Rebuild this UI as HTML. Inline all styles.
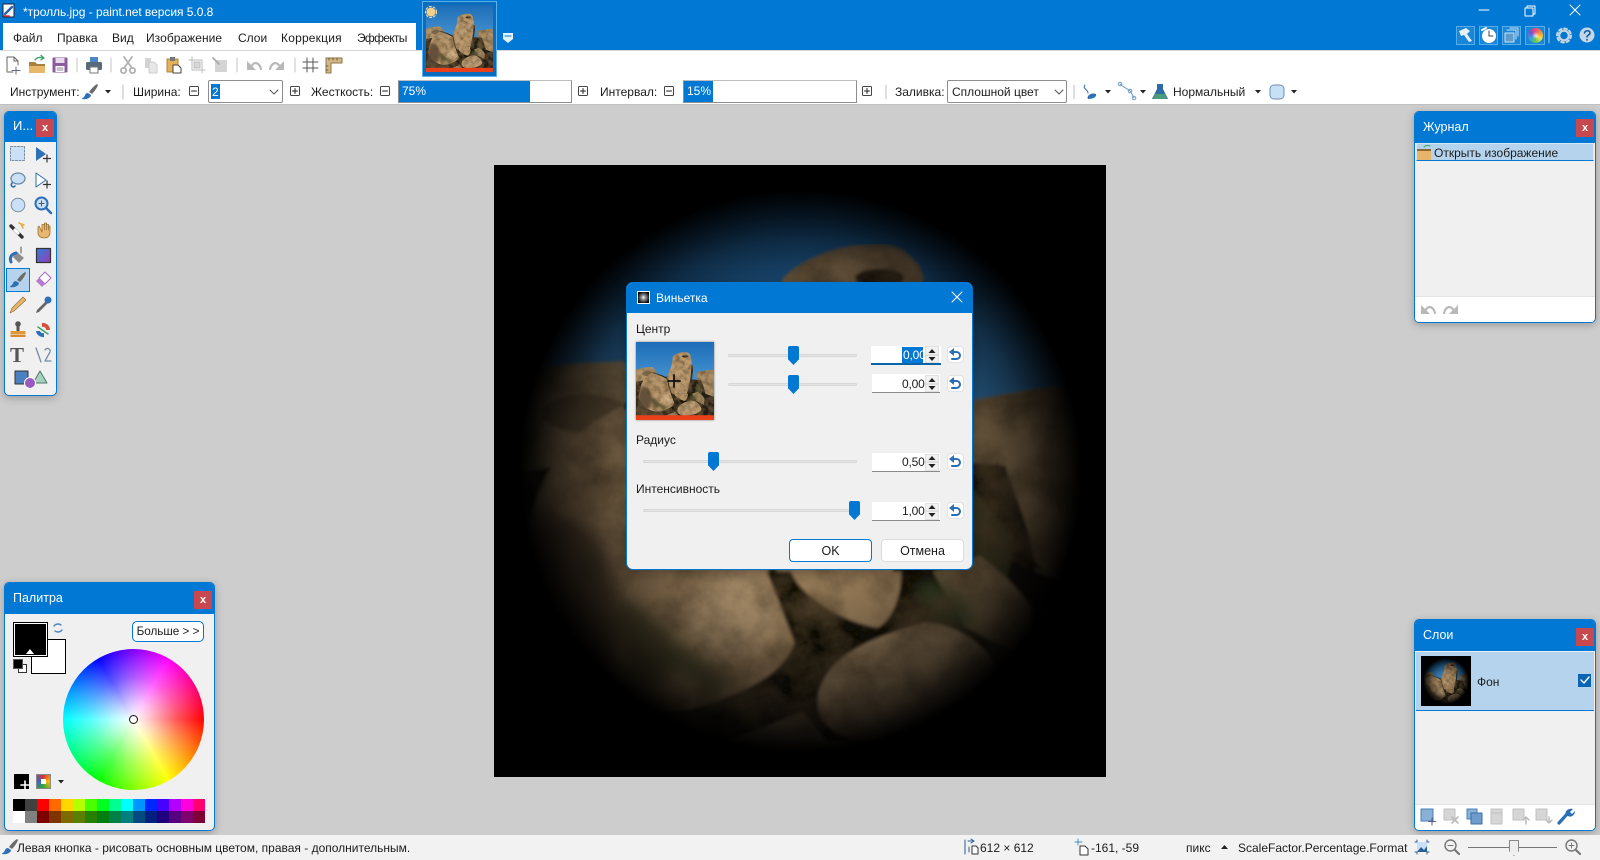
<!DOCTYPE html>
<html lang="ru"><head><meta charset="utf-8"><title>paint.net</title>
<style>
html,body{margin:0;padding:0;width:1600px;height:860px;overflow:hidden;background:#cdcdcd;font-family:"Liberation Sans","Noto Sans CJK SC",sans-serif;font-size:12px;color:#1c1c1c}
div,span,svg{position:absolute;box-sizing:border-box}
.t{white-space:nowrap;line-height:16px}
.panel{background:#f0f0f0;border:1px solid #0078d4;border-radius:5px;box-shadow:0 2px 8px rgba(0,0,0,.25);overflow:hidden}
.hd{left:0;top:0;right:0;background:#0078d4}
.x{background:#c7494f;color:#fff;font-weight:bold;font-size:11px;text-align:center;line-height:18px}
.inp{background:#fff;border-bottom:1px solid #8a8a8a}
.sp{background:#f1f1f1;border:1px solid #e0e0e0}
.rs{background:#fff;border:1px solid #e2e2e2;border-radius:4px}
.tr{height:3px;background:#e4e4e4;border:1px solid #d8d8d8;border-radius:2px}
.th{width:11px;height:19px;background:#0078d4;clip-path:polygon(0 0,100% 0,100% 70%,50% 100%,0 70%);border-radius:2px}
.bar{background:#fff;border:1px solid #8d8d8d;border-top-color:#bdbdbd;height:23px;top:80px}
.fill{left:0;top:0;bottom:0;background:#0078d4;color:#fff;padding-left:3px;line-height:21px}
.btn{background:#fff;border:1px solid #dcdcdc;border-radius:4px;text-align:center;line-height:22px;font-size:12.5px}
</style></head><body>

<!-- title + toolbar -->
<div style="left:0;top:0;width:1600px;height:50px;background:#0078d4"></div>
<div style="left:3px;top:23px;width:413px;height:27px;background:#fff"></div>
<div style="left:0;top:50px;width:1600px;height:55px;background:#fff;border-top:1px solid #d8d8d8;border-bottom:1px solid #c0c0c0"></div>
<div class="t" style="left:23px;top:4px;color:#fff;font-size:12px;letter-spacing:-.04px">*тролль.jpg - paint.net версия 5.0.8</div>
<div class="t" style="left:13px;top:30px">Файл</div>
<div class="t" style="left:57px;top:30px">Правка</div>
<div class="t" style="left:112px;top:30px">Вид</div>
<div class="t" style="left:146px;top:30px;letter-spacing:.05px">Изображение</div>
<div class="t" style="left:238px;top:30px">Слои</div>
<div class="t" style="left:281px;top:30px;letter-spacing:.2px">Коррекция</div>
<div class="t" style="left:357px;top:30px;letter-spacing:-.7px">Эффекты</div>

<div class="t" style="left:10px;top:84px">Инструмент:</div>
<div class="t" style="left:133px;top:84px">Ширина:</div>
<div style="left:208px;top:80px;width:75px;height:23px;background:#fff;border:1px solid #8d8d8d;border-radius:2px"></div>
<div class="t" style="left:211px;top:84px;background:#0078d4;color:#fff;height:15px;padding:0 1px">2</div>
<div class="t" style="left:311px;top:84px">Жесткость:</div>
<div class="bar" style="left:398px;width:174px"><div class="fill" style="width:131px">75%</div></div>
<div class="t" style="left:600px;top:84px">Интервал:</div>
<div class="bar" style="left:683px;width:174px"><div class="fill" style="width:29px">15%</div></div>
<div class="t" style="left:895px;top:84px">Заливка:</div>
<div style="left:947px;top:80px;width:120px;height:23px;background:#fff;border:1px solid #8d8d8d;border-radius:2px"></div>
<div class="t" style="left:952px;top:84px">Сплошной цвет</div>
<div class="t" style="left:1173px;top:84px">Нормальный</div>

<!-- document thumbnail -->
<div style="left:422px;top:1px;width:75px;height:76px;border:1px solid #58b0ee;background:#0a6cbc"></div>
<svg style="left:426px;top:5px" width="67" height="67" viewBox="10 12 1548 1548"><use href="#photo"/><rect x="10" y="1465" width="1548" height="95" fill="#e8401a"/></svg>

<!-- canvas -->
<svg style="left:494px;top:165px" width="612" height="612" viewBox="10 12 1548 1548">
<defs>
<linearGradient id="sky" x1="0" y1="0" x2="0" y2="1"><stop offset="0" stop-color="#1c6db8"/><stop offset=".4" stop-color="#3f8dcc"/></linearGradient>
<radialGradient id="vig" gradientUnits="userSpaceOnUse" cx="784" cy="786" r="725">
<stop offset="0" stop-color="#000" stop-opacity=".05"/><stop offset=".4" stop-color="#000" stop-opacity=".16"/><stop offset=".6" stop-color="#000" stop-opacity=".34"/><stop offset=".8" stop-color="#000" stop-opacity=".64"/><stop offset=".9" stop-color="#000" stop-opacity=".85"/><stop offset=".98" stop-color="#000"/></radialGradient>
<filter id="tex" x="0" y="0" width="100%" height="100%"><feTurbulence type="fractalNoise" baseFrequency=".009" numOctaves="5" seed="7" result="n"/><feColorMatrix in="n" values="0 0 0 0 .14 0 0 0 0 .09 0 0 0 0 .04 1.8 0 0 0 -.62" result="d"/><feGaussianBlur in="SourceGraphic" stdDeviation="4" result="b"/><feComposite in="d" in2="b" operator="in" result="d2"/><feMerge><feMergeNode in="b"/><feMergeNode in="d2"/></feMerge></filter>
<filter id="soft" x="-30%" y="-30%" width="160%" height="160%"><feGaussianBlur stdDeviation="22"/></filter>
<g id="photo">
<rect x="10" y="12" width="1548" height="1548" fill="url(#sky)"/>
<g filter="url(#tex)">
<path d="M10,560L120,530L200,515L340,508L420,600L350,800L10,900Z" fill="#b0946c"/>
<ellipse cx="240" cy="640" rx="110" ry="48" fill="#806a4e"/>
<path d="M1210,610L1290,595L1400,575L1558,560V1100L1230,1000Z" fill="#aa8c64"/>
<path d="M10,800L620,700L1558,800V1560H10Z" fill="#241b13"/>
<path d="M740,300C780,260 850,225 930,215C970,215 1000,205 1040,225C1080,250 1100,280 1095,310L1130,500C1120,700 1080,960 1000,1120L760,1120C720,1040 640,900 620,740C640,640 720,520 730,400Z" fill="#bd9b70"/>
<ellipse cx="985" cy="298" rx="62" ry="24" fill="#33261b"/>
<path d="M1125,480C1125,700 1075,980 1000,1120" fill="none" stroke="#2a2018" stroke-width="34"/>
<path d="M1290,700C1300,820 1370,900 1380,1040L1560,1100V620Z" fill="#ad9068"/>
<path d="M1285,760C1290,860 1340,960 1400,1040C1340,1020 1260,940 1240,840Z" fill="#1d1610"/>
<path d="M1210,820L1320,950L1310,1060L1180,1040Z" fill="#3c4428"/>
<path d="M100,920C120,800 200,680 340,620L620,740C640,900 700,1020 760,1120C780,1170 780,1200 770,1220C740,1300 650,1350 500,1390C300,1420 120,1300 60,1100Z" fill="#b8966c"/>
<ellipse cx="190" cy="1130" rx="130" ry="230" fill="#65503a" filter="url(#soft)"/>
<ellipse cx="610" cy="1150" rx="120" ry="110" fill="#d2b084" filter="url(#soft)"/>
<path d="M340,620C500,660 620,720 640,760C660,900 700,1020 740,1080" fill="none" stroke="#241b13" stroke-width="18"/>
<path d="M700,1040L1180,1040L1120,1180L1000,1220L830,1350L810,1440L730,1370L770,1220Z" fill="#17120c"/>
<path d="M760,1040L1040,1040C1040,1100 1020,1160 980,1182C900,1170 790,1110 760,1040Z" fill="#b5946a"/>
<path d="M1120,1040L1240,1000C1290,1040 1370,1110 1370,1150L1360,1260L1200,1180Z" fill="#a58860"/>
<path d="M1065,1090L1120,1050L1210,1130L1225,1200L1140,1180Z" fill="#465430" filter="url(#soft)"/>
<path d="M830,1350C850,1260 950,1210 1100,1170C1200,1170 1290,1260 1310,1340C1300,1430 1100,1480 950,1470C870,1460 820,1420 830,1350Z" fill="#bf9f76"/>
<path d="M600,1470L790,1395L850,1470L1100,1490L1200,1560H560Z" fill="#96805f"/>
<path d="M60,1100C130,1320 300,1440 520,1390L600,1560H10Z" fill="#4e3f2e"/>
<path d="M225,1000L265,990L275,1060L240,1080Z" fill="#4a4c2e" filter="url(#soft)"/>
<path d="M285,1150L350,1110L470,1220L620,1320L560,1370L480,1290L380,1330L340,1240Z" fill="#5c5636" filter="url(#soft)"/>
</g>
</g>
<g id="vphoto"><use href="#photo"/><rect x="10" y="12" width="1548" height="1548" fill="url(#vig)"/></g>
</defs>
<use href="#vphoto"/>
</svg>

<!-- Tools panel -->
<div class="panel" style="left:4px;top:111px;width:53px;height:285px"><div class="hd" style="height:30px"></div></div>
<div class="t" style="left:13px;top:118px;color:#fff;font-size:13px">И...</div>
<div class="x" style="left:36px;top:119px;width:18px;height:18px">x</div>
<div style="left:6px;top:268px;width:24px;height:24px;background:#b5d3ec;border:1px solid #0078d4"></div>

<!-- Palette -->
<div class="panel" style="left:4px;top:582px;width:211px;height:249px"><div class="hd" style="height:31px"></div></div>
<div class="t" style="left:13px;top:590px;color:#fff;font-size:12.5px">Палитра</div>
<div class="x" style="left:194px;top:591px;width:18px;height:18px">x</div>
<div style="left:31px;top:639px;width:35px;height:35px;background:#fff;border:1px solid #000"></div>
<div style="left:13px;top:622px;width:35px;height:35px;background:#000;border:1px solid #000;box-shadow:inset 0 0 0 1px #fff"></div>
<div style="left:26px;top:649px;width:8px;height:5px;background:#fff;clip-path:polygon(50% 0,100% 100%,0 100%)"></div>
<div style="left:18px;top:664px;width:9px;height:9px;background:#fff;border:1px solid #333"></div>
<div style="left:13px;top:659px;width:10px;height:10px;background:#000;border:1px solid #555"></div>
<div class="t" style="left:132px;top:621px;width:72px;height:21px;background:#fff;border:1px solid #0078d4;border-radius:5px;text-align:center;line-height:19px;font-size:11.7px">Больше &gt; &gt;</div>
<div style="left:63px;top:649px;width:141px;height:141px;border-radius:50%;background:radial-gradient(circle closest-side,#fff 0,rgba(255,255,255,.75) 25%,rgba(255,255,255,.35) 60%,rgba(255,255,255,0) 100%),conic-gradient(from 90deg,#f00,#ff0,#0f0,#0ff,#00f,#f0f,#f00)"></div>
<div style="left:129px;top:715px;width:9px;height:9px;border:1.5px solid #111;border-radius:50%"></div>
<div style="left:14px;top:774px;width:15px;height:15px;background:#000"></div>
<div style="left:36px;top:774px;width:15px;height:15px;background:conic-gradient(#d33,#fb0,#3a3,#36c,#d33);border:1px solid #888"></div>
<div style="left:41px;top:779px;width:5px;height:5px;background:#fff"></div>
<div style="left:13px;top:799px;width:192px;height:24px;display:grid;grid-template-columns:repeat(16,12px);grid-template-rows:12px 12px" id="pal">
<i style="background:#000"></i><i style="background:#404040"></i><i style="background:#f00"></i><i style="background:#ff6a00"></i><i style="background:#ffd800"></i><i style="background:#b6ff00"></i><i style="background:#4cff00"></i><i style="background:#00ff21"></i><i style="background:#00ff90"></i><i style="background:#0ff"></i><i style="background:#0094ff"></i><i style="background:#0026ff"></i><i style="background:#4800ff"></i><i style="background:#b200ff"></i><i style="background:#ff00dc"></i><i style="background:#ff006e"></i>
<i style="background:#fff"></i><i style="background:#808080"></i><i style="background:#7f0000"></i><i style="background:#7f3300"></i><i style="background:#7f6a00"></i><i style="background:#5b7f00"></i><i style="background:#267f00"></i><i style="background:#007f0e"></i><i style="background:#007f46"></i><i style="background:#007f7f"></i><i style="background:#004a7f"></i><i style="background:#001f7f"></i><i style="background:#21007f"></i><i style="background:#57007f"></i><i style="background:#7f006e"></i><i style="background:#7f0037"></i>
</div>

<!-- History -->
<div class="panel" style="left:1414px;top:111px;width:182px;height:212px"><div class="hd" style="height:31px"></div>
<div style="left:0;right:0;top:184px;bottom:0;background:#fff;border-top:1px solid #e4e4e4"></div></div>
<div class="t" style="left:1423px;top:119px;color:#fff;font-size:12.5px">Журнал</div>
<div class="x" style="left:1576px;top:119px;width:18px;height:18px">x</div>
<div style="left:1416px;top:143px;width:178px;height:18px;background:#b5d3ec;border:1px solid #d6e8f6;border-bottom:1px solid #0078d4"></div>
<div class="t" style="left:1434px;top:145px">Открыть изображение</div>

<!-- Layers -->
<div class="panel" style="left:1414px;top:619px;width:182px;height:212px"><div class="hd" style="height:31px"></div>
<div style="left:0;right:0;top:184px;bottom:0;background:#fff;border-top:1px solid #e4e4e4"></div></div>
<div class="t" style="left:1423px;top:627px;color:#fff;font-size:12.5px">Слои</div>
<div class="x" style="left:1576px;top:628px;width:18px;height:18px">x</div>
<div style="left:1416px;top:652px;width:178px;height:59px;background:#b5d3ec;border-bottom:1px solid #0078d4"></div>
<svg style="left:1421px;top:656px" width="50" height="50" viewBox="10 12 1548 1548"><use href="#vphoto"/></svg>
<div class="t" style="left:1477px;top:674px">Фон</div>
<div style="left:1578px;top:674px;width:13px;height:13px;background:#0a64b4"></div>

<!-- Status bar -->
<div style="left:0;top:835px;width:1600px;height:25px;background:#f2f2f2"></div>
<div class="t" style="left:17px;top:840px">Левая кнопка - рисовать основным цветом, правая - дополнительным.</div>
<div class="t" style="left:980px;top:840px">612 × 612</div>
<div class="t" style="left:1091px;top:840px">-161, -59</div>
<div class="t" style="left:1186px;top:840px">пикс</div>
<div class="t" style="left:1238px;top:840px">ScaleFactor.Percentage.Format</div>
<div style="left:1468px;top:847px;width:89px;height:1px;background:#777"></div>
<div style="left:1509px;top:840px;width:10px;height:16px;background:#eee;border:1px solid #888;clip-path:polygon(0 0,100% 0,100% 70%,50% 100%,0 70%)"></div>

<!-- Dialog -->
<div style="left:626px;top:282px;width:347px;height:288px;background:#f0f0f0;border:1px solid #0078d4;border-radius:7px;box-shadow:0 4px 16px rgba(0,0,0,.35);overflow:hidden"><div class="hd" style="height:30px"></div></div>
<div style="left:637px;top:291px;width:13px;height:13px;background:radial-gradient(circle,#fff 0,#999 25%,#000 80%);border:1px solid #fff"></div>
<div class="t" style="left:656px;top:290px;color:#fff;font-size:12px">Виньетка</div>
<div class="t" style="left:636px;top:321px">Центр</div>
<svg style="left:636px;top:342px;box-shadow:0 0 2px rgba(0,0,0,.5)" width="78" height="78" viewBox="10 12 1548 1548"><use href="#photo"/><rect x="10" y="1465" width="1548" height="95" fill="#e8401a"/></svg>
<div class="tr" style="left:728px;top:354px;width:129px"></div><div class="th" style="left:788px;top:346px"></div>
<div class="tr" style="left:728px;top:383px;width:129px"></div><div class="th" style="left:788px;top:375px"></div>
<div class="inp" style="left:871px;top:346px;width:70px;height:19px;border-bottom:2px solid #0a64a8"></div>
<div class="t" style="left:902px;top:347px;background:#0078d4;color:#fff;width:21px;padding-left:1px;letter-spacing:-.2px;overflow:hidden">0,00</div>
<div class="inp" style="left:872px;top:374px;width:68px;height:19px"></div>
<div class="t" style="left:902px;top:376px;letter-spacing:-.2px">0,00</div>
<div class="t" style="left:636px;top:432px">Радиус</div>
<div class="tr" style="left:643px;top:460px;width:214px"></div><div class="th" style="left:708px;top:452px"></div>
<div class="inp" style="left:872px;top:453px;width:68px;height:19px"></div>
<div class="t" style="left:902px;top:454px;letter-spacing:-.2px">0,50</div>
<div class="t" style="left:636px;top:481px">Интенсивность</div>
<div class="tr" style="left:643px;top:509px;width:214px"></div><div class="th" style="left:849px;top:501px"></div>
<div class="inp" style="left:872px;top:502px;width:68px;height:19px"></div>
<div class="t" style="left:902px;top:503px;letter-spacing:-.2px">1,00</div>
<div class="sp" style="left:925px;top:346px;width:14px;height:17px"></div>
<div class="sp" style="left:925px;top:375px;width:14px;height:17px"></div>
<div class="sp" style="left:925px;top:454px;width:14px;height:17px"></div>
<div class="sp" style="left:925px;top:503px;width:14px;height:17px"></div>
<div class="rs" style="left:947px;top:346px;width:17px;height:17px"></div>
<div class="rs" style="left:947px;top:375px;width:17px;height:17px"></div>
<div class="rs" style="left:947px;top:453px;width:17px;height:17px"></div>
<div class="rs" style="left:947px;top:502px;width:17px;height:17px"></div>
<div class="btn" style="left:789px;top:539px;width:83px;height:23px;border:1.5px solid #0078d4">OK</div>
<div class="btn" style="left:881px;top:539px;width:83px;height:23px">Отмена</div>

<!-- Top-right highlight boxes and colour icon -->
<div style="left:1456px;top:26px;width:19px;height:19px;background:#1a86d8;border:1px solid #55aeea"></div>
<div style="left:1479px;top:26px;width:19px;height:19px;background:#1a86d8;border:1px solid #55aeea"></div>
<div style="left:1502px;top:26px;width:19px;height:19px;background:#1a86d8;border:1px solid #55aeea"></div>
<div style="left:1525px;top:26px;width:20px;height:19px;background:#1a86d8;border:1px solid #55aeea"></div>
<div style="left:1528px;top:28px;width:15px;height:15px;border-radius:50%;background:radial-gradient(circle,rgba(255,255,255,.7) 0,rgba(255,255,255,0) 35%),conic-gradient(#ef4a7a,#f6923c,#f6e04a,#5cc84e,#3aa0e0,#7f4fc8,#ef4a7a)"></div>

<!-- Icon overlay -->
<svg style="left:0;top:0" width="1600" height="860" fill="none" stroke-linecap="round" stroke-linejoin="round">
<defs>
<g id="brush"><path d="M7,-8C4,-6 1,-3 -1,0L2,2C4,0 7,-4 8,-7Z" fill="#6b6b6b"/><path d="M-2,1C-5,1 -5,4 -6,5C-7,6 -8,6 -8,7C-4,8 1,6 1,3Z" fill="#2f6fb5"/></g>
<path id="care" d="M-3,-2H3L0,1.5Z" fill="#222"/>
<g id="minus"><rect x="-4.5" y="-4.5" width="9" height="9" rx="1" stroke="#444" fill="#fff"/><path d="M-2.5,0H2.5" stroke="#222"/></g>
<g id="plus"><rect x="-4.5" y="-4.5" width="9" height="9" rx="1" stroke="#444" fill="#fff"/><path d="M-2.5,0H2.5M0,-2.5V2.5" stroke="#222"/></g>
<g id="chev"><path d="M-4,-2L0,2L4,-2" stroke="#555"/></g>
<g id="undo"><path d="M-3,1C0,-5 5,-4 7,3" stroke="#b8b8b8" stroke-width="2.2"/><path d="M-7,-5L-7,4L2,4Z" fill="#b8b8b8"/></g>
<g id="spin"><path d="M-3.500,-2L0,-6L3.500,-2ZM-3.500,2L0,6L3.500,2Z" fill="#222"/><path d="M-6,0H6" stroke="#cfcfcf"/></g>
<g id="rst"><path d="M-3,-3H1.500A3.400,3.400 0 0 1 1.500,4H-3" stroke="#2a6fb5" stroke-width="2"/><path d="M-1,-7L-6,-3L-1,1Z" fill="#2a6fb5"/></g>
<g id="lay"><rect x="-7" y="-7" width="11" height="11" fill="#d6d6d6" stroke="#c0c0c0"/></g>
</defs>

<!-- titlebar app icon -->
<g transform="translate(3,4)"><rect width="11" height="13" fill="#fff" stroke="#223"/><path d="M2,10L9,3" stroke="#2a5fb0" stroke-width="2.4"/><path d="M1,12H6" stroke="#c33" stroke-width="1.5"/></g>
<!-- window buttons -->
<path d="M1479,10H1489" stroke="#fff"/>
<path d="M1525,8H1533V16H1525ZM1527,8V6H1535V14H1533" stroke="#fff"/>
<path d="M1570,5L1580,15M1580,5L1570,15" stroke="#fff"/>
<!-- right icons -->
<path d="M1459,31L1466,28L1470,31L1467,34L1472,41L1469,42L1464,35L1461,36Z" fill="#e6eef6"/>
<circle cx="1489" cy="36" r="7" fill="#fff"/><path d="M1489,31V36H1493" stroke="#444"/><path d="M1482,30L1486,28" stroke="#fff" stroke-width="2"/>
<path d="M1505,33H1514V42H1505Z" fill="#5f9cc9" stroke="#cfe2f2"/><path d="M1507,30H1516V39M1510,28H1518V36" stroke="#cfe2f2"/>
<path d="M1549,28V43" stroke="#a8d0ee"/>
<circle cx="1564" cy="35.500" r="4.800" stroke="#c8d6e2" stroke-width="2.200"/><circle cx="1564" cy="35.500" r="7" stroke="#c8d6e2" stroke-width="2" stroke-dasharray="2.800 2.700"/>
<circle cx="1587" cy="35" r="7.500" fill="#c6d6e6"/>
<path d="M1584.500,33C1585,30 1590,30 1590,33C1590,35 1587,35 1587,37M1587,39.500V40" stroke="#0a5fa8" stroke-width="1.6"/>
<!-- doc thumb sun + chip -->
<g transform="translate(431,12)"><circle r="4.500" fill="#f6d08a"/><circle r="5.500" stroke="#f9e3b8" stroke-dasharray="2 2"/></g>
<path d="M503,33H513V39L508,43L503,39Z" fill="#e4f0fa"/><path d="M505,36H511" stroke="#0078d4"/>

<!-- toolbar row 1 -->
<g transform="translate(13,65)"><path d="M-6,6V-8H1L5,-4V0M1,-8V-4H5M-6,7H0" stroke="#666"/><path d="M3,2V9M-1,5.500H7" stroke="#668"/></g>
<g transform="translate(37,65)"><path d="M-8,-3H-2L0,-1H8V8H-8Z" fill="#e8b86a"/><path d="M-8,-3H-2L0,-1H8V1H-8Z" fill="#a88040"/><path d="M-2,-5C0,-8 3,-8 6,-7M4,-9.500L7,-7L4,-5" stroke="#3ca06a" stroke-width="1.300"/></g>
<g transform="translate(60,65)"><rect x="-7.500" y="-7.500" width="15" height="15" rx="1" fill="#8a5a9c"/><rect x="-4.500" y="-7" width="9" height="5" fill="#e8dcec"/><rect x="-4.500" y="1" width="9" height="6" fill="#fff"/><path d="M-3,3H3M-3,5H3" stroke="#888"/></g>
<path d="M77,58V72M111,58V72M237,58V72M295,58V72" stroke="#c4c4c4"/>
<g transform="translate(94,65)"><rect x="-4" y="-8" width="8" height="6" fill="#4a88c4"/><rect x="-8" y="-3" width="16" height="8" rx="1.500" fill="#5a6a7a"/><rect x="-4" y="2" width="8" height="6" fill="#fff" stroke="#777"/></g>
<g transform="translate(128,65)" stroke="#b0b0b0" stroke-width="1.800"><path d="M-4,-8L4,3M4,-8L-4,3"/><circle cx="-4.500" cy="5.500" r="2.600"/><circle cx="4.500" cy="5.500" r="2.600"/></g>
<g transform="translate(151,65)"><path d="M-6,-7H0V3H-6Z" fill="#d4d4d4"/><path d="M-2,-3H3L6,0V8H-2Z" fill="#e8e8e8" stroke="#ccc"/></g>
<g transform="translate(174,65)"><rect x="-7" y="-6" width="11" height="13" fill="#e6b05a" stroke="#b08438"/><rect x="-4" y="-8" width="5" height="4" fill="#777"/><path d="M-1,0H4L7,3V8H-1Z" fill="#fff" stroke="#444"/></g>
<g transform="translate(197,65)" stroke="#bbb"><path d="M-8,-5H5V8M-5,-8V5H8"/><rect x="-3" y="-3" width="6" height="6" fill="#d8d8d8"/></g>
<g transform="translate(220,65)"><rect x="-5" y="-5" width="12" height="12" fill="#d4d4d4"/><path d="M-7,-7L-1,-1" stroke="#aaa" stroke-width="1.800"/></g>
<use href="#undo" transform="translate(254,66)"/><use href="#undo" transform="translate(277,66) scale(-1,1)"/>
<path d="M307,58V72M313,58V72M303,62H318M303,68H318" stroke="#555"/>
<path d="M326,58H342V63H331V73H326Z" fill="#d2b888" stroke="#8e7648"/><path d="M329,58V60M333,58V60M337,58V60M326,66H328M326,70H328" stroke="#6e5a34"/>

<!-- toolbar row 2 -->
<use href="#brush" transform="translate(90,92)"/><use href="#care" transform="translate(108,92)"/>
<path d="M123,85V99M886,85V99M1074,85V99" stroke="#bfbfbf"/>
<use href="#minus" transform="translate(194,91)"/><use href="#chev" transform="translate(274,92)"/><use href="#plus" transform="translate(295,91)"/>
<use href="#minus" transform="translate(385,91)"/><use href="#plus" transform="translate(583,91)"/>
<use href="#minus" transform="translate(669,91)"/><use href="#plus" transform="translate(867,91)"/>
<use href="#chev" transform="translate(1059,92)"/>
<g transform="translate(1091,92)"><path d="M-6,-7C-9,-3 -3,-3 -3,1" stroke="#2a6fb5"/><path d="M-3,7C-5,4 0,0 5,2C6,5 2,7 -3,7Z" fill="#2f6fb5"/></g>
<use href="#care" transform="translate(1108,92)"/>
<path d="M1120,84C1124,88 1127,88 1130,91C1133,94 1132,96 1134,98" stroke="#6f9cc5"/><circle cx="1120" cy="84" r="1.800" stroke="#6f9cc5"/><circle cx="1130" cy="91" r="1.800" stroke="#6f9cc5"/><circle cx="1134" cy="98" r="1.800" stroke="#6f9cc5"/>
<use href="#care" transform="translate(1143,92)"/>
<path d="M1157,84H1163V89L1168,99H1152L1157,89Z" fill="#2f6aa8"/><path d="M1155,94H1165L1167,99H1153Z" fill="#4d9a78"/>
<use href="#care" transform="translate(1258,92)"/>
<rect x="1270" y="85" width="14" height="14" rx="4" fill="#c6e0f6" stroke="#6e8fb0"/>
<use href="#care" transform="translate(1294,92)"/>

<!-- tools -->
<rect x="10.500" y="146.500" width="14" height="14" fill="#c9e0f6" stroke="#7a8ca0" stroke-dasharray="2 1.500"/>
<g transform="translate(43,154)"><path d="M-7,-7L3,0L-7,7Z" fill="#2f6fb5"/><path d="M4,1V8M0.500,4.500H7.500" stroke="#333" stroke-width="1.200"/></g>
<g transform="translate(17,180)"><ellipse cx="1" cy="-1.500" rx="7" ry="5.500" fill="#c9e0f6" stroke="#6a8aa8" stroke-width="1.300"/><path d="M-5,3C-7,6 -4,8 -2,6" stroke="#2f6fb5" stroke-width="1.600"/></g>
<g transform="translate(43,180)"><path d="M-7,-7L3,0L-7,7Z" fill="#fff" stroke="#2f6fb5"/><path d="M4,1V8M0.500,4.500H7.500" stroke="#333" stroke-width="1.200"/></g>
<circle cx="18" cy="205" r="6.800" fill="#c9e0f6" stroke="#7a8ca0"/>
<g transform="translate(43,205)"><circle cx="-1.500" cy="-1.500" r="6" fill="#c9e0f6" stroke="#2f6fb5" stroke-width="2"/><path d="M3,3L8,8" stroke="#2f6fb5" stroke-width="2.600"/><path d="M-4,-1.500H1M-1.500,-4V1" stroke="#555"/></g>
<g transform="translate(18,230)"><path d="M-7,-4L4,7" stroke="#333" stroke-width="3.400"/><path d="M-3,0L0,3" stroke="#fff" stroke-width="3.200"/><path d="M3,-6L5,-2M6,-5L1,-7" stroke="#e0b040" stroke-width="1.600"/></g>
<path d="M38,227V233C38,236 41,238 44,238C48,238 50,236 50,232V226H48.500V230V224.500H46.500V230V223H44.500V230V224.500H42V232L39,226Z" fill="#e8b870" stroke="#9a7030" stroke-width=".8"/>
<g transform="translate(18,255)"><path d="M-1,-3L6,3L1,8L-5,2Z" fill="#8c8c8c"/><path d="M-7,7C-9,2 -6,-1 -2,-2" stroke="#2f6fb5" stroke-width="3"/><path d="M3,-8V-2" stroke="#555"/></g>
<linearGradient id="gr" x1="0" y1="0" x2="1" y2="1"><stop offset="0" stop-color="#2f80d8"/><stop offset="1" stop-color="#9a3ab8"/></linearGradient>
<rect x="36.500" y="248.500" width="14" height="14" fill="url(#gr)" stroke="#333" stroke-width="1.200"/>
<use href="#brush" transform="translate(18,280)"/>
<g transform="translate(43,280)"><path d="M2,-8L8,-2L2,4L-4,-2Z" fill="#fff" stroke="#a86cc0"/><path d="M-4,-2L2,4L-1,7L-7,1Z" fill="#b978d0"/></g>
<g transform="translate(18,305)"><path d="M5,-8L8,-5L-4,6L-8,8L-6,3Z" fill="#e8b46a" stroke="#8a6a3a" stroke-width=".6"/></g>
<g transform="translate(43,305)"><path d="M3,-4L-6,5L-7,8L-4,7L5,-2Z" fill="#666"/><circle cx="5" cy="-5" r="3.500" fill="#2f6fb5"/></g>
<g transform="translate(18,330)"><circle cy="-6" r="2.800" fill="#555"/><rect x="-1.500" y="-4" width="3" height="5" fill="#555"/><rect x="-7.500" y="1" width="15" height="3.500" fill="#e0983c"/><rect x="-7.500" y="5" width="15" height="2" fill="#d68a30"/></g>
<g transform="translate(43,330)"><path d="M-1,-7A7,7 0 0 1 7,0H3A3,3 0 0 0 -1,-3Z" fill="#d8503c"/><path d="M-7,1A7,7 0 0 0 1,7V3A3,3 0 0 1 -3,1Z" fill="#2f6fb5"/><path d="M-5,-3L5,4" stroke="#3ca06a" stroke-width="1.500"/></g>
<text x="10" y="362" fill="#555" font-family="Liberation Serif" font-size="21" font-weight="bold">T</text>
<g transform="translate(43,355)"><path d="M-7,-7L-2,7M2,-5C4,-8 8,-6 7,-3L2,6H8" stroke="#7a8ca0" stroke-width="1.300"/></g>
<rect x="15" y="371" width="13" height="13" fill="#4a7fc0" stroke="#333"/>
<path d="M35,377L42,389H28Z" transform="translate(5,-6)" fill="#a8cfc0" stroke="#4a7a6a"/>
<circle cx="30" cy="383" r="5.500" fill="#9a5ac0" stroke="#fff"/>

<!-- palette small -->
<g transform="translate(58,628)"><path d="M-4,-2A5,5 0 0 1 3,-3M4,2A5,5 0 0 1 -3,3" stroke="#4a7fb5" stroke-width="1.400"/></g>
<path d="M21,785H29M25,781V789" stroke="#fff" stroke-width="1.600"/>
<use href="#care" transform="translate(61,782)"/>

<!-- history -->
<g transform="translate(1424,153)"><path d="M-7,-3H7V7H-7Z" fill="#e8b46a"/><path d="M-7,-4H7V-2H-7Z" fill="#8a6a30"/><path d="M0,-6C2,-8 4,-8 6,-7" stroke="#3ca06a"/></g>
<use href="#undo" transform="translate(1428,310)"/><use href="#undo" transform="translate(1451,310) scale(-1,1)"/>

<!-- layers -->
<path d="M1581,680L1584,683L1589,677" stroke="#fff" stroke-width="1.400"/>
<g transform="translate(1428,816)"><rect x="-7" y="-7" width="12" height="12" fill="#8ab0d8" stroke="#4a7fb5"/><path d="M4,2V9M0.500,5.500H7.500" stroke="#557"/></g>
<use href="#lay" transform="translate(1451,816)"/><path d="M1452,817L1458,823M1458,817L1452,823" stroke="#bbb" stroke-width="1.600"/>
<g transform="translate(1474,816)"><rect x="-7" y="-7" width="10" height="10" fill="#8ab0d8" stroke="#4a7fb5"/><rect x="-3" y="-3" width="11" height="11" fill="#6f9ccc" stroke="#3a6fa8"/></g>
<use href="#lay" transform="translate(1498,816)"/><use href="#lay" transform="translate(1498,820)"/>
<use href="#lay" transform="translate(1520,816)"/><path d="M1526,824V818M1523,820L1526,817L1529,820" stroke="#bbb" stroke-width="1.500"/>
<use href="#lay" transform="translate(1543,816)"/><path d="M1549,817V823M1546,820L1549,823L1552,820" stroke="#bbb" stroke-width="1.500"/>
<path d="M1559,823L1568,813" stroke="#2a6fb5" stroke-width="3.200"/><path d="M1566,815C1564,811 1569,808 1573,809L1570,812L1572,814L1575,811C1575,815 1571,818 1568,816" fill="#2a6fb5"/>

<!-- status bar -->
<use href="#brush" transform="translate(10,847)"/>
<g transform="translate(971,847)"><path d="M-6,-7V7M-3,-6H2M0,-8L3,-6L0,-4M-2,5V0" stroke="#2a5f95"/><path d="M1,-1H5L7,1V7H1Z" fill="#fff" stroke="#333"/></g>
<g transform="translate(1082,847)"><path d="M-7,-5H0M-4,-8V-2" stroke="#4a8fc5"/><path d="M-2,-1H3L6,2V8H-2Z" fill="#fff" stroke="#333"/></g>
<path d="M1221,849L1224.500,845L1228,849Z" fill="#222"/>
<g transform="translate(1422,847)"><rect x="-5" y="-5" width="10" height="10" fill="#c9e0f6"/><path d="M-5,5L-1,0L2,3L5,-1V5Z" fill="#2a5f95"/><path d="M-7,-5H-5V-7M7,-5H5V-7M-7,5H-5V7M7,5H5V7" stroke="#2a5f95"/></g>
<g transform="translate(1452,847)" stroke="#777"><circle cx="-1.500" cy="-1.500" r="5.500" stroke-width="1.400"/><path d="M3,3L7,7" stroke-width="2.200"/><path d="M-4,-1.500H1"/></g>
<g transform="translate(1573,847)" stroke="#777"><circle cx="-1.500" cy="-1.500" r="5.500" stroke-width="1.400"/><path d="M3,3L7,7" stroke-width="2.200"/><path d="M-4,-1.500H1M-1.500,-4V1"/></g>

<!-- dialog -->
<path d="M952,292L962,302M962,292L952,302" stroke="#fff" stroke-width="1.100"/>
<path d="M674,375V387M668,381H680" stroke="#111" stroke-width="1.800"/>
<use href="#spin" transform="translate(932,355)"/><use href="#spin" transform="translate(932,384)"/><use href="#spin" transform="translate(932,462)"/><use href="#spin" transform="translate(932,511)"/>
<use href="#rst" transform="translate(955,355)"/><use href="#rst" transform="translate(955,384)"/><use href="#rst" transform="translate(955,462)"/><use href="#rst" transform="translate(955,511)"/>
</svg>
</body></html>
